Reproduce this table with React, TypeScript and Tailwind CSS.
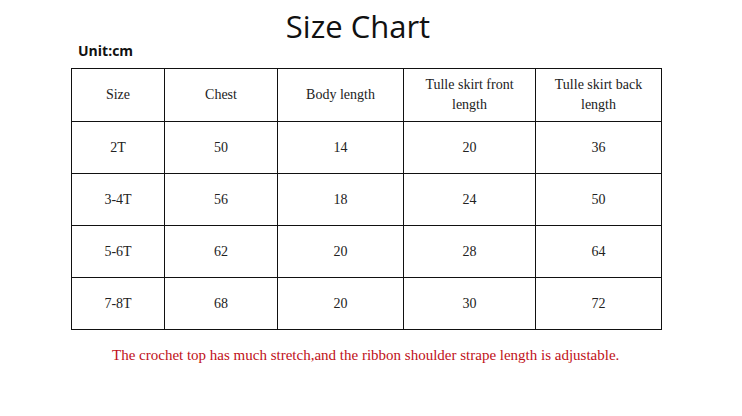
import React from "react";

const header = ["Size", "Chest", "Body length", "Tulle skirt front length", "Tulle skirt back length"];
const rows = [
  ["2T", "50", "14", "20", "36"],
  ["3-4T", "56", "18", "24", "50"],
  ["5-6T", "62", "20", "28", "64"],
  ["7-8T", "68", "20", "30", "72"],
];

const App: React.FC = () => {
  return (
    <div className="w-[742px] h-[416px] bg-white relative overflow-hidden">
      <h1 className="pt-[6px] text-center text-[31px] leading-[40px] text-[#111] font-['Open_Sans',sans-serif] pl-[-2px] mr-[26px]">
        Size Chart
      </h1>
      <p className="ml-[78px] mt-[-4px] text-[14px] leading-[18px] font-bold text-[#111] font-['Open_Sans',sans-serif]">
        Unit:cm
      </p>
      <div className="ml-[71px] mt-[8px] w-[591px] grid grid-cols-[92px_112px_125px_131px_125px] grid-rows-[52px_51px_51px_51px_51px] gap-px p-px bg-[#111] font-['Liberation_Serif',serif] text-[14px] leading-[20px] text-[#222]">
        {header.map((h) => (
          <div key={h} className="bg-white flex items-center justify-center text-center px-[14px]">
            {h}
          </div>
        ))}
        {rows.map((r) =>
          r.map((c, i) => (
            <div key={r[0] + i} className="bg-white flex items-center justify-center">
              {c}
            </div>
          ))
        )}
      </div>
      <p className="mt-[15px] ml-[112px] text-[15px] leading-[20px] text-[#c01018] font-['Liberation_Serif',serif]">
        The crochet top has much stretch,and the ribbon shoulder strape length is adjustable.
      </p>
    </div>
  );
};

export default App;
